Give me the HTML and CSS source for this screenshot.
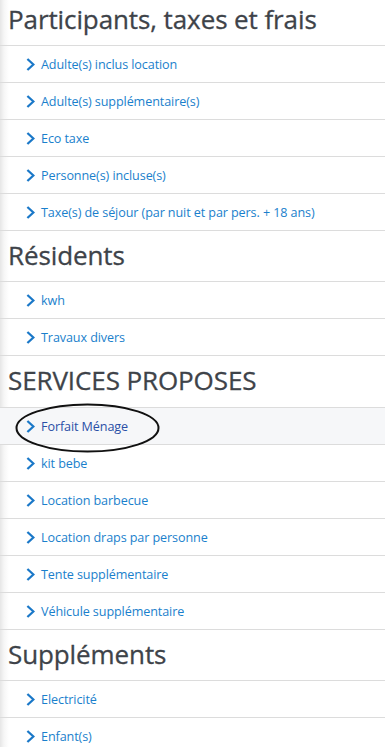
FILE: index.html
```html
<!DOCTYPE html>
<html lang="fr">
<head>
  <meta charset="UTF-8">
  <meta name="viewport" content="width=device-width, initial-scale=1.0">
  <title>Prestations</title>
  <link rel="stylesheet" href="styles.css">
</head>
<body>
  <div class="page">
    <section class="group">
      <h2 class="group-title">Participants, taxes et frais</h2>
      <ul class="items">
        <li><a class="item" href="#"><svg class="chev" viewBox="0 0 9 13"><path d="M1.4 1 L7.4 6.5 L1.4 12"/></svg>Adulte(s) inclus location</a></li>
        <li><a class="item" href="#"><svg class="chev" viewBox="0 0 9 13"><path d="M1.4 1 L7.4 6.5 L1.4 12"/></svg>Adulte(s) supplémentaire(s)</a></li>
        <li><a class="item" href="#"><svg class="chev" viewBox="0 0 9 13"><path d="M1.4 1 L7.4 6.5 L1.4 12"/></svg>Eco taxe</a></li>
        <li><a class="item" href="#"><svg class="chev" viewBox="0 0 9 13"><path d="M1.4 1 L7.4 6.5 L1.4 12"/></svg>Personne(s) incluse(s)</a></li>
        <li><a class="item" href="#"><svg class="chev" viewBox="0 0 9 13"><path d="M1.4 1 L7.4 6.5 L1.4 12"/></svg>Taxe(s) de séjour (par nuit et par pers. + 18 ans)</a></li>
      </ul>
    </section>

    <section class="group">
      <h2 class="group-title">Résidents</h2>
      <ul class="items">
        <li><a class="item" href="#"><svg class="chev" viewBox="0 0 9 13"><path d="M1.4 1 L7.4 6.5 L1.4 12"/></svg>kwh</a></li>
        <li><a class="item" href="#"><svg class="chev" viewBox="0 0 9 13"><path d="M1.4 1 L7.4 6.5 L1.4 12"/></svg>Travaux divers</a></li>
      </ul>
    </section>

    <section class="group">
      <h2 class="group-title tall">SERVICES PROPOSES</h2>
      <ul class="items">
        <li class="active">
          <a class="item" href="#"><svg class="chev" viewBox="0 0 9 13"><path d="M1.4 1 L7.4 6.5 L1.4 12"/></svg>Forfait Ménage</a>
          <svg class="circled" viewBox="0 0 145 50"><ellipse cx="72.5" cy="25" rx="71" ry="23.5"/></svg>
        </li>
        <li><a class="item" href="#"><svg class="chev" viewBox="0 0 9 13"><path d="M1.4 1 L7.4 6.5 L1.4 12"/></svg>kit bebe</a></li>
        <li><a class="item" href="#"><svg class="chev" viewBox="0 0 9 13"><path d="M1.4 1 L7.4 6.5 L1.4 12"/></svg>Location barbecue</a></li>
        <li><a class="item" href="#"><svg class="chev" viewBox="0 0 9 13"><path d="M1.4 1 L7.4 6.5 L1.4 12"/></svg>Location draps par personne</a></li>
        <li><a class="item" href="#"><svg class="chev" viewBox="0 0 9 13"><path d="M1.4 1 L7.4 6.5 L1.4 12"/></svg>Tente supplémentaire</a></li>
        <li><a class="item" href="#"><svg class="chev" viewBox="0 0 9 13"><path d="M1.4 1 L7.4 6.5 L1.4 12"/></svg>Véhicule supplémentaire</a></li>
      </ul>
    </section>

    <section class="group">
      <h2 class="group-title">Suppléments</h2>
      <ul class="items">
        <li><a class="item" href="#"><svg class="chev" viewBox="0 0 9 13"><path d="M1.4 1 L7.4 6.5 L1.4 12"/></svg>Electricité</a></li>
        <li><a class="item" href="#"><svg class="chev" viewBox="0 0 9 13"><path d="M1.4 1 L7.4 6.5 L1.4 12"/></svg>Enfant(s)</a></li>
      </ul>
    </section>
  </div>
</body>
</html>
```

FILE: styles.css
```css
html, body {
  margin: 0;
  padding: 0;
  height: 100%;
  overflow: hidden;
}
body {
  font-family: "Open Sans", "Noto Sans", Arial, sans-serif;
  background: linear-gradient(to right, #e6e6e6 0, #f6f6f6 4px, #fff 9px);
}
.page {
  margin-top: -5px;
}
.group-title {
  margin: 0;
  padding: 0 8px;
  height: 50px;
  line-height: 48px;
  font-size: 26px;
  font-weight: 400;
  color: #3e4349;
  letter-spacing: -0.1px;
  -webkit-text-stroke: 0.3px #3e4349;
}
.group-title.tall {
  height: 51px;
}
.items {
  list-style: none;
  margin: 0;
  padding: 0;
  border-top: 1px solid #dcdcdc;
}
.items li {
  position: relative;
  border-bottom: 1px solid #dcdcdc;
}
.item {
  display: flex;
  align-items: center;
  gap: 6px;
  height: 36px;
  padding-left: 26px;
  font-size: 12.6px;
  letter-spacing: -0.1px;
  color: #1a7fcc;
  text-decoration: none;
}
.chev {
  width: 9px;
  height: 13px;
  fill: none;
  stroke: #1a78c8;
  stroke-width: 2.3;
}
.active {
  background: #f6f7f9;
}
.active .item {
  color: #2a4fa6;
}
.circled {
  position: absolute;
  left: 15px;
  top: -5px;
  width: 145px;
  height: 50px;
  fill: none;
  stroke: #111;
  stroke-width: 2;
  pointer-events: none;
}
```
